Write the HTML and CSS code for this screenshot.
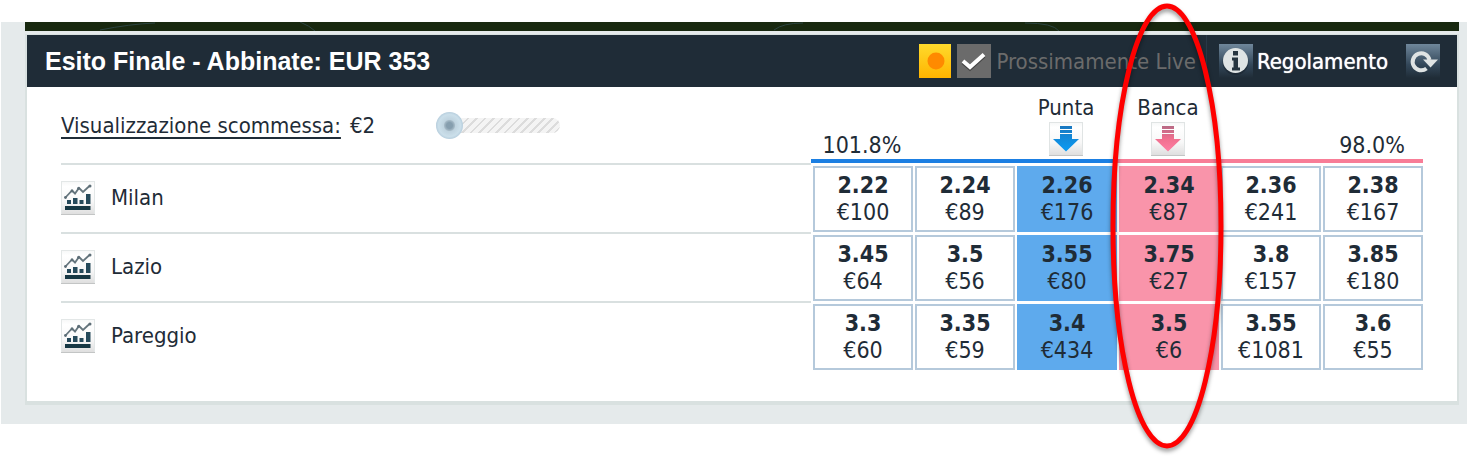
FILE: index.html
```html
<!DOCTYPE html>
<html lang="it">
<head>
    <meta charset="utf-8">
    <title>Esito Finale</title>
    <meta name="viewport" content="width=device-width, initial-scale=1">
    <link rel="stylesheet" href="styles.css">
</head>
<body>
    <!-- shared icons -->
    <svg class="defs" width="0" height="0">
        <defs>
            <linearGradient id="btnFill" x1="0" y1="0" x2="0" y2="1">
                <stop offset="0" stop-color="#f6f7f7"/>
                <stop offset="0.15" stop-color="#ffffff"/>
                <stop offset="0.6" stop-color="#f8f8f8"/>
                <stop offset="1" stop-color="#dedede"/>
            </linearGradient>
            <linearGradient id="blueFill" x1="0" y1="0" x2="0" y2="1">
                <stop offset="0" stop-color="#1a78c0"/>
                <stop offset="1" stop-color="#0a9cf5"/>
            </linearGradient>
            <linearGradient id="pinkFill" x1="0" y1="0" x2="0" y2="1">
                <stop offset="0" stop-color="#b86a85"/>
                <stop offset="0.5" stop-color="#f0708f"/>
                <stop offset="1" stop-color="#ff7fa3"/>
            </linearGradient>
            <linearGradient id="steel" x1="0" y1="0" x2="0" y2="1">
                <stop offset="0" stop-color="#6f879b"/>
                <stop offset="0.6" stop-color="#34485a"/>
                <stop offset="1" stop-color="#1f2c37"/>
            </linearGradient>
            <linearGradient id="amber" x1="0" y1="0" x2="0" y2="1">
                <stop offset="0" stop-color="#ffda2c"/>
                <stop offset="1" stop-color="#ffb400"/>
            </linearGradient>
        </defs>
        <symbol id="chart" viewBox="0 0 34 34">
            <rect x="0.5" y="0.5" width="33" height="33" fill="url(#btnFill)" stroke="#e3e7e7"/>
            <path d="M0 33.5H34" stroke="#c3c5c5"/>
            <path d="M4 17L11 9.500L14 12.500L18 7L22 11L29 4.500" fill="none" stroke="#65757d" stroke-width="1.800"/>
            <g fill="#5d6e77">
                <circle cx="4.500" cy="16.500" r="1.400"/><circle cx="11" cy="10" r="1.400"/>
                <circle cx="17.500" cy="7.500" r="1.400"/><circle cx="29" cy="5" r="1.500"/>
            </g>
            <path d="M6 19h4v4H6zM12 17h4.500v6H12zM18.500 19h4v4h-4zM25 13h4.500v10H25z" fill="#264a5b"/>
            <path d="M4 25h25.500v4H4z" fill="#173844"/>
        </symbol>
        <symbol id="arrow" viewBox="0 0 34 34">
            <rect x="0.5" y="0.5" width="33" height="33" fill="url(#btnFill)" stroke="#e0e4e4"/>
            <path d="M0 33.500H34" stroke="#c3c5c5"/>
            <path d="M11 4h12v3H11zM11 8h12v3H11zM11 12h12v5h7L17 29.500L4 17h7z"/>
        </symbol>
    </svg>

    <div class="page">
        <div class="pitch">
            <svg width="100%" height="9" aria-hidden="true">
                <path d="M75 8Q105 2 130 1M275 0Q285 4 290 9M749 8Q758 1 778 1M1000 1Q1028 1 1034 9" fill="none" stroke="#2c4440" stroke-width="1"/>
            </svg>
        </div>

        <div class="market">
            <div class="market-header">
                <h1>Esito Finale - Abbinate: EUR 353</h1>
                <div class="live">
                    <svg width="32" height="34" aria-hidden="true">
                        <rect width="32" height="34" fill="url(#amber)"/>
                        <circle cx="17" cy="17" r="8.500" fill="#ff8a00"/>
                    </svg>
                    <svg class="tick" width="34" height="34" aria-hidden="true">
                        <rect width="34" height="34" fill="#6b6b6b"/>
                        <path d="M6 18.500L13 24.500L27 12" fill="none" stroke="#444" stroke-width="4"/>
                        <path d="M6 17L13 23L27 10.500" fill="none" stroke="#fff" stroke-width="4"/>
                    </svg>
                    <span>Prossimamente Live</span>
                </div>
                <a href="#" class="rules">
                    <svg width="34" height="34" aria-hidden="true">
                        <rect width="34" height="34" fill="url(#steel)"/>
                        <circle cx="16.500" cy="18" r="13" fill="#152029" opacity="0.500"/>
                        <circle cx="16.500" cy="16.500" r="12.500" fill="#dfe4e4"/>
                        <path d="M14 7h5v4.500h-5zM13 13.500h6v10h2v3h-8v-3h1.500v-7h-1.500z" fill="#26353f"/>
                    </svg>
                    Regolamento
                </a>
                <button class="icon-btn" aria-label="Aggiorna">
                    <svg width="34" height="34" aria-hidden="true">
                        <rect width="34" height="34" fill="url(#steel)"/>
                        <path d="M20.500 24.500A8.500 8.500 0 1 1 23.500 16" fill="none" stroke="#dfe3e3" stroke-width="4"/>
                        <path d="M17 15.500H32L24.500 23.500Z" fill="#dfe3e3"/>
                    </svg>
                </button>
            </div>

            <table class="odds">
                <thead>
                    <tr>
                        <th class="stake">
                            <div class="stake-row">
                                <label for="stake">Visualizzazione scommessa:</label>
                                <output for="stake">€2</output>
                                <input type="range" id="stake" min="2" max="1000" value="2">
                            </div>
                        </th>
                        <th class="back percent">101.8%</th>
                        <th class="back"></th>
                        <th class="back">
                            Punta
                            <svg width="34" height="34" fill="url(#blueFill)" aria-hidden="true"><use href="#arrow"/></svg>
                        </th>
                        <th class="lay">
                            Banca
                            <svg width="34" height="34" fill="url(#pinkFill)" aria-hidden="true"><use href="#arrow"/></svg>
                        </th>
                        <th class="lay"></th>
                        <th class="lay percent">98.0%</th>
                    </tr>
                </thead>
                <tbody>
                    <tr>
                        <th class="runner" scope="row"><div><button class="icon-btn" aria-label="Grafico Milan"><svg width="34" height="34"><use href="#chart"/></svg></button>Milan</div></th>
                        <td><button class="price"><b>2.22</b>€100</button></td>
                        <td><button class="price"><b>2.24</b>€89</button></td>
                        <td><button class="price best-back"><b>2.26</b>€176</button></td>
                        <td><button class="price best-lay"><b>2.34</b>€87</button></td>
                        <td><button class="price"><b>2.36</b>€241</button></td>
                        <td><button class="price"><b>2.38</b>€167</button></td>
                    </tr>
                    <tr>
                        <th class="runner" scope="row"><div><button class="icon-btn" aria-label="Grafico Lazio"><svg width="34" height="34"><use href="#chart"/></svg></button>Lazio</div></th>
                        <td><button class="price"><b>3.45</b>€64</button></td>
                        <td><button class="price"><b>3.5</b>€56</button></td>
                        <td><button class="price best-back"><b>3.55</b>€80</button></td>
                        <td><button class="price best-lay"><b>3.75</b>€27</button></td>
                        <td><button class="price"><b>3.8</b>€157</button></td>
                        <td><button class="price"><b>3.85</b>€180</button></td>
                    </tr>
                    <tr>
                        <th class="runner" scope="row"><div><button class="icon-btn" aria-label="Grafico Pareggio"><svg width="34" height="34"><use href="#chart"/></svg></button>Pareggio</div></th>
                        <td><button class="price"><b>3.3</b>€60</button></td>
                        <td><button class="price"><b>3.35</b>€59</button></td>
                        <td><button class="price best-back"><b>3.4</b>€434</button></td>
                        <td><button class="price best-lay"><b>3.5</b>€6</button></td>
                        <td><button class="price"><b>3.55</b>€1081</button></td>
                        <td><button class="price"><b>3.6</b>€55</button></td>
                    </tr>
                </tbody>
            </table>
        </div>

        <!-- red ring round the Banca column -->
        <svg class="ring" width="114" height="448" aria-hidden="true">
            <ellipse cx="57" cy="224" rx="54" ry="220"/>
        </svg>
    </div>
</body>
</html>
```
FILE: styles.css
```css
body {
    font-family: "DejaVu Sans Condensed", "DejaVu Sans", sans-serif;
    font-size: 22px;
    line-height: 27px;
    color: #1f2c37;
    background-color: #fff;
    box-sizing: border-box;
    min-height: 100vh;
    margin: 0;
    padding: 22px 0 0 1px;
}
button {
    font: inherit;
    color: inherit;
    cursor: pointer;
}
svg {
    display: block;
    flex: none;
}
.defs {
    position: absolute;
}
.page {
    position: relative;
    background-color: #e5eaeb;
    padding: 0 8px 19px 24px;
}
.pitch {
    background-color: #18280f;
    height: 9px;
    margin-bottom: 3px;
    overflow: hidden;
}
.market {
    background-color: #fff;
    border: 2px solid #d9e1e0;
    border-top-width: 1px;
    border-bottom-width: 4px;
    padding-bottom: 31px;
}
.market-header {
    display: flex;
    align-items: center;
    height: 52px;
    padding: 0 17px 0 18px;
    background-color: #1f2c37;
    color: #fff;
}
.market-header h1 {
    font-family: "Liberation Sans", Arial, sans-serif;
    font-size: 25px;
    margin: 0;
    flex: 1;
}
.live {
    display: flex;
    align-items: center;
    height: 100%;
    color: #6b6b6b;
    padding-right: 10px;
    border-right: 1px solid #293947;
}
.tick {
    margin: 0 5px 0 6px;
}
.rules {
    display: flex;
    align-items: center;
    gap: 4px;
    margin: 0 18px 0 12px;
    color: #fff;
    text-decoration: none;
    text-shadow: 0 0 1px #fff;
}
.icon-btn {
    background: none;
    border: none;
    padding: 0;
}
.odds {
    width: calc(100% - 68px);
    margin: 0 34px;
    table-layout: fixed;
    border-collapse: separate;
    border-spacing: 0;
}
.odds th {
    font-weight: normal;
    padding: 0;
}
.odds thead th {
    width: 102px;
    height: 72px;
    vertical-align: bottom;
}
.odds thead th svg {
    margin: 1px auto 3px;
}
.odds thead .stake {
    width: auto;
    vertical-align: middle;
}
.back {
    border-bottom: 4px solid #1b7fe3;
}
.lay {
    border-bottom: 4px solid #f87d97;
}
.percent,
.price {
    font-size: 23px;
}
.stake-row {
    display: flex;
    align-items: center;
}
.stake-row label {
    text-decoration: underline;
    text-underline-offset: 4px;
}
.stake-row output {
    width: 86px;
    margin-left: 9px;
    text-align: left;
}
#stake {
    appearance: none;
    width: 124px;
    height: 28px;
    margin: 0;
    background: none;
}
#stake::-webkit-slider-runnable-track {
    height: 15px;
    border-radius: 8px;
    background: repeating-linear-gradient(135deg, #f4f4f4 0 4px, #dcdcdc 4px 6px);
}
#stake::-webkit-slider-thumb {
    appearance: none;
    width: 27px;
    height: 27px;
    margin-top: -6px;
    border-radius: 50%;
    background: radial-gradient(circle, #869eae 0 3px, #a4b8c5 5px, #bfd3df 6px, #cbdfea 11px, #b3cbdb 14px);
}
.runner div {
    display: flex;
    align-items: center;
    gap: 16px;
    height: 65px;
    padding-bottom: 2px;
    border-top: 2px solid #d9e0e0;
}
.odds td {
    padding: 3px 0 0 2px;
}
.price {
    display: block;
    width: 100%;
    height: 66px;
    padding: 0;
    background-color: #fff;
    border: 2px solid #b5c9db;
}
.price b {
    display: block;
}
.best-back {
    background-color: #5eaaed;
    border-color: #5eaaed;
}
.best-lay {
    background-color: #f994aa;
    border-color: #f994aa;
}
.ring {
    position: absolute;
    top: -20px;
    right: 243px;
    overflow: visible;
    pointer-events: none;
    filter: drop-shadow(0 3px 2px rgba(0, 0, 0, 0.4));
}
.ring ellipse {
    fill: none;
    stroke: #f00;
    stroke-width: 5px;
}
```
